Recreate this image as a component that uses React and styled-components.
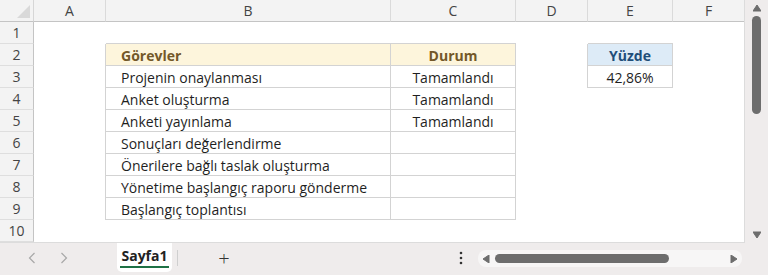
import styled, { createGlobalStyle } from "styled-components";

const GlobalStyle = createGlobalStyle`
  html, body {
    margin: 0;
    padding: 0;
    background: #efecec;
    overflow: hidden;
  }
  * { box-sizing: border-box; }
`;

const Window = styled.div`
  width: 768px;
  height: 275px;
  display: flex;
  flex-direction: column;
  font-family: "Open Sans", "Noto Sans", sans-serif;
  background: #efecec;
`;

const Main = styled.div`
  display: flex;
  height: 243px;
`;

const Sheet = styled.div`
  width: 745px;
  height: 243px;
  background: #fff;
  display: grid;
  grid-template-columns: 34px 72px 285px 125px 72px 85px 72px;
  grid-auto-rows: 22px;
  border-right: 1px solid #dcdcdc;
  border-bottom: 1px solid #dcdcdc;
  overflow: hidden;
`;

const Corner = styled.div`
  background: #f3f3f3;
  border-right: 1px solid #d6d6d6;
  border-bottom: 1px solid #c4c4c4;
  display: flex;
  align-items: flex-end;
  justify-content: flex-end;
  padding: 0 3px 3px 0;
`;

const ColHead = styled.div`
  background: #f3f3f3;
  border-right: 1px solid #dadada;
  border-bottom: 1px solid #c4c4c4;
  color: #444;
  font-size: 14px;
  display: flex;
  align-items: center;
  justify-content: center;
`;

const RowHead = styled.div`
  background: #f3f3f3;
  border-right: 1px solid #c4c4c4;
  border-bottom: 1px solid #dedede;
  color: #444;
  font-size: 14px;
  display: flex;
  align-items: center;
  justify-content: center;
`;

const Blank = styled.div``;

const Cell = styled.div`
  border-right: 1px solid #d3d3d3;
  border-bottom: 1px solid #d3d3d3;
  box-shadow: ${(p) =>
    [p.$top && "0 -1px 0 #d3d3d3", p.$left && "-1px 0 0 #d3d3d3"]
      .filter(Boolean)
      .join(", ") || "none"};
  background: ${(p) => p.$fill || "#fff"};
  color: ${(p) => p.$color || "#1f1f1f"};
  font-weight: ${(p) => (p.$bold ? 700 : 400)};
  font-size: 14px;
  display: flex;
  align-items: center;
  justify-content: ${(p) => (p.$center ? "center" : "flex-start")};
  padding-left: ${(p) => (p.$center ? "0" : "15px")};
  padding-top: 1px;
  white-space: nowrap;
`;

const VScroll = styled.div`
  width: 23px;
  display: flex;
  flex-direction: column;
  align-items: center;
  padding: 4px 0;
`;

const Thumb = styled.div`
  width: 9px;
  height: ${(p) => p.$len}px;
  border-radius: 5px;
  background: #6d6d6d;
  margin-top: 4px;
`;

const Spacer = styled.div`
  flex: 1;
`;

const BottomBar = styled.div`
  flex: 1;
  display: flex;
  align-items: flex-start;
`;

const Nav = styled.div`
  width: 117px;
  height: 30px;
  display: flex;
  align-items: center;
  padding-left: 28px;
  gap: 24px;
`;

const Tab = styled.div`
  width: 55px;
  height: 29px;
  background: #fff;
  border-radius: 0 0 5px 5px;
  display: flex;
  flex-direction: column;
  align-items: center;
  justify-content: center;
  font-size: 14px;
  font-weight: 700;
  color: #222;
`;

const TabLabel = styled.span`
  border-bottom: 2px solid #1e7145;
  padding: 0 1px 1px;
  line-height: 18px;
`;

const Divider = styled.div`
  width: 1px;
  height: 16px;
  background: #cfcfcf;
  margin: 7px 0 0 5px;
`;

const AddBtn = styled.div`
  width: 92px;
  height: 30px;
  display: flex;
  align-items: center;
  justify-content: center;
  color: #333;
  font-size: 20px;
  font-weight: 300;
`;

const Dots = styled.div`
  margin-left: 181px;
  width: 20px;
  height: 30px;
  display: flex;
  align-items: center;
  justify-content: center;
`;

const HScroll = styled.div`
  margin: 7px 0 0 7px;
  width: 264px;
  height: 17px;
  border-radius: 8px;
  background: #f7f6f6;
  display: flex;
  align-items: center;
  padding: 0 4px;
`;

const HThumb = styled.div`
  width: 174px;
  height: 9px;
  border-radius: 5px;
  background: #6d6d6d;
  margin-left: 5px;
`;

const tasks = [
  "Projenin onaylanması",
  "Anket oluşturma",
  "Anketi yayınlama",
  "Sonuçları değerlendirme",
  "Önerilere bağlı taslak oluşturma",
  "Yönetime başlangıç raporu gönderme",
  "Başlangıç toplantısı",
];
const status = ["Tamamlandı", "Tamamlandı", "Tamamlandı", "", "", "", ""];

const Tri = ({ dir }) => {
  const pts = {
    up: "0,7 4,1 8,7",
    down: "0,1 4,7 8,1",
    left: "7,0 1,4 7,8",
    right: "1,0 7,4 1,8",
  }[dir];
  return (
    <svg width="8" height="8" viewBox="0 0 8 8">
      <polygon points={pts} fill="#6d6d6d" strokeLinejoin="round" stroke="#6d6d6d" strokeWidth="1" />
    </svg>
  );
};

const Chevron = ({ left }) => (
  <svg width="8" height="12" viewBox="0 0 8 12">
    <path
      d={left ? "M6.5 1 L1.5 6 L6.5 11" : "M1.5 1 L6.5 6 L1.5 11"}
      fill="none"
      stroke="#a8a8a8"
      strokeWidth="1.2"
    />
  </svg>
);

const renderRow = (r) => {
  const cells = [<RowHead key="h">{r}</RowHead>, <Blank key="a" />];
  const t = r - 3;
  if (r === 2) {
    cells.push(
      <Cell key="b" $top $left $fill="#fdf5dc" $color="#735829" $bold>
        Görevler
      </Cell>,
      <Cell key="c" $top $fill="#fdf5dc" $color="#735829" $bold $center>
        Durum
      </Cell>
    );
  } else if (t >= 0 && t < tasks.length) {
    cells.push(
      <Cell key="b" $left>{tasks[t]}</Cell>,
      <Cell key="c" $center>{status[t]}</Cell>
    );
  } else {
    cells.push(<Blank key="b" />, <Blank key="c" />);
  }
  cells.push(<Blank key="d" />);
  if (r === 2) {
    cells.push(
      <Cell key="e" $top $left $fill="#ddebf7" $color="#1f4e79" $bold $center>
        Yüzde
      </Cell>
    );
  } else if (r === 3) {
    cells.push(
      <Cell key="e" $left $center>
        42,86%
      </Cell>
    );
  } else {
    cells.push(<Blank key="e" />);
  }
  cells.push(<Blank key="f" />);
  return cells;
};

export default function App() {
  return (
    <Window>
      <GlobalStyle />
      <Main>
        <Sheet>
          <Corner>
            <svg width="13" height="13" viewBox="0 0 13 13">
              <polygon points="13,0 13,13 0,13" fill="#d9d9d9" />
            </svg>
          </Corner>
          {["A", "B", "C", "D", "E", "F"].map((c) => (
            <ColHead key={c}>{c}</ColHead>
          ))}
          {Array.from({ length: 10 }, (_, i) => renderRow(i + 1))}
        </Sheet>
        <VScroll>
          <Tri dir="up" />
          <Thumb $len={98} />
          <Spacer />
          <Tri dir="down" />
        </VScroll>
      </Main>
      <BottomBar>
        <Nav>
          <Chevron left />
          <Chevron />
        </Nav>
        <Tab>
          <TabLabel>Sayfa1</TabLabel>
        </Tab>
        <Divider />
        <AddBtn>+</AddBtn>
        <Dots>
          <svg width="4" height="14" viewBox="0 0 4 14">
            <circle cx="2" cy="2" r="1.3" fill="#333" />
            <circle cx="2" cy="7" r="1.3" fill="#333" />
            <circle cx="2" cy="12" r="1.3" fill="#333" />
          </svg>
        </Dots>
        <HScroll>
          <Tri dir="left" />
          <HThumb />
          <Spacer />
          <Tri dir="right" />
        </HScroll>
      </BottomBar>
    </Window>
  );
}
